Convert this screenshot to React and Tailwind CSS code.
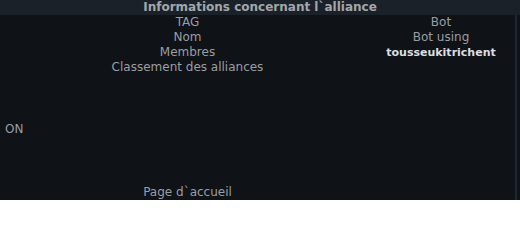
export default function App() {
  const rows = [
    ['TAG', 'Bot'],
    ['Nom', 'Bot using'],
    ['Membres', 'tousseukitrichent'],
    ['Classement des alliances', ''],
  ]

  return (
    <div className="w-[520px] h-[200px] overflow-hidden bg-[#0f1217] text-[12px] leading-[15px] text-[#9a9ea3] font-['DejaVu_Sans',sans-serif]">
      <div className="h-[15px] bg-[#1b2129] text-center font-bold text-[#a3a7ab] leading-[14px]">
        Informations concernant l`alliance
      </div>
      <div className="h-[185px] border-r-2 border-[#1c2735] mr-[3px] flex flex-col">
        {rows.map(([label, value], i) => (
          <div key={label} className="flex">
            <div className="w-[375px] text-center">{label}</div>
            <div className={`w-[132px] text-center ${i === 2 ? 'font-bold text-[11px] text-[#dcdee0]' : ''}`}>{value}</div>
          </div>
        ))}
        <div className="h-[47px]" />
        <div className="pl-[5px]">ON</div>
        <div className="h-[48px]" />
        <div className="w-[375px] text-center">Page d`accueil</div>
      </div>
    </div>
  )
}
